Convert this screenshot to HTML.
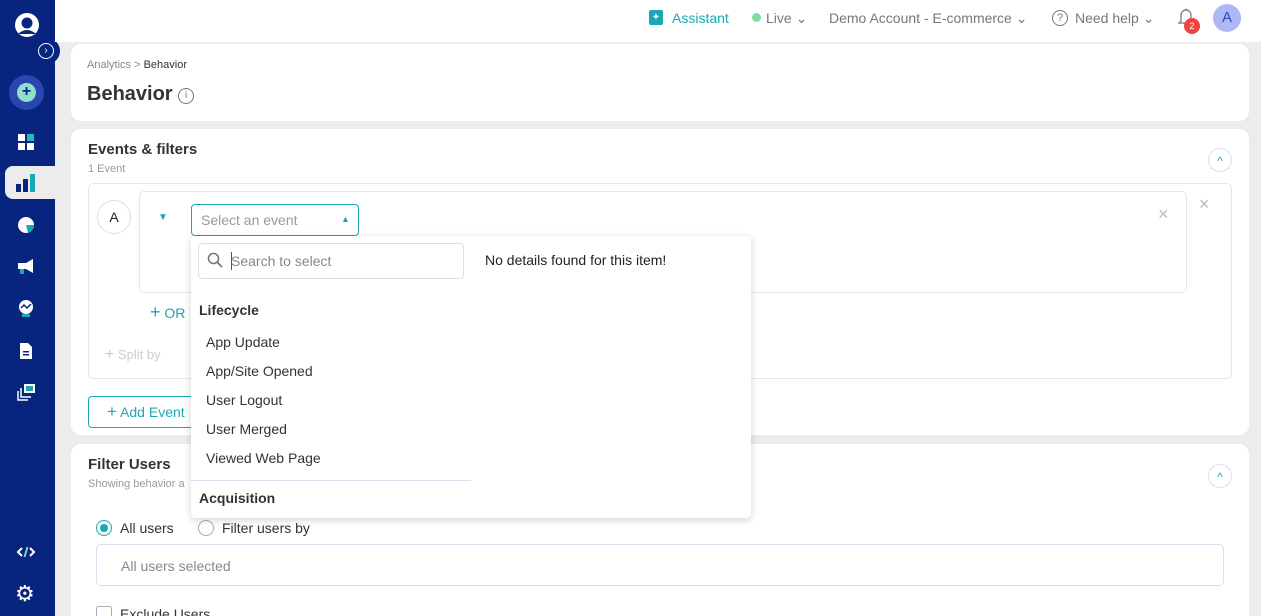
<!DOCTYPE html>
<html><head><meta charset="utf-8"><style>
*{box-sizing:border-box;margin:0;padding:0}
html{width:1261px;height:616px;overflow:hidden}
body{width:1261px;height:616px;overflow:hidden;background:#ececec;font-family:"Liberation Sans",sans-serif;color:#222;position:relative}
.side{position:absolute;left:0;top:0;width:55px;height:616px;background:#07247e}
.top{position:absolute;left:55px;top:0;width:1206px;height:42px;background:#fff}
.card{position:absolute;background:#fff;border-radius:10px}
.t{position:absolute;white-space:nowrap}
.ic{position:absolute;left:16px;width:20px;height:20px}
</style></head><body>
<div class="side">
 <svg style="position:absolute;left:14px;top:12px" width="26" height="26" viewBox="0 0 26 26"><circle cx="13" cy="13" r="12" fill="#fff"/><circle cx="13" cy="11" r="5.5" fill="#07247e"/><path d="M4 22Q13 14 22 22" fill="#07247e"/></svg>
 <div style="position:absolute;left:36px;top:38px;width:24px;height:26px;border-radius:0 13px 13px 0;background:#07247e"></div>
 <div style="position:absolute;left:38px;top:43px;width:16px;height:16px;border-radius:50%;border:1.5px solid #fff;color:#fff;font-size:10px;line-height:13px;text-align:center">›</div>
 <div style="position:absolute;left:9px;top:75px;width:35px;height:35px;border-radius:50%;background:#2a47b0"></div>
 <div style="position:absolute;left:17px;top:83px;width:19px;height:19px;border-radius:50%;background:#8ee0c8;color:#07247e;font-size:16px;line-height:18px;text-align:center;font-weight:bold">+</div>
 <svg class="ic" style="top:132px" viewBox="0 0 20 20"><rect x="2" y="2" width="7" height="7" fill="#fff"/><rect x="11" y="2" width="7" height="7" fill="#2bb"/><rect x="2" y="11" width="7" height="7" fill="#fff"/><rect x="11" y="11" width="7" height="7" fill="#fff"/></svg>
 <div style="position:absolute;left:5px;top:166px;width:55px;height:33px;background:#ececec;border-radius:8px 0 0 8px"></div>
 <svg class="ic" style="top:173px" viewBox="0 0 20 20"><rect x="0" y="11" width="5" height="8" fill="#07247e"/><rect x="7" y="6" width="5" height="13" fill="#07247e"/><rect x="14" y="1" width="5" height="18" fill="#1aa8b5"/></svg>
 <svg class="ic" style="top:215px" viewBox="0 0 20 20"><circle cx="10" cy="10" r="8" fill="#fff"/><path d="M10 10L18 10A8 8 0 0 1 12 18Z" fill="#1aa8b5"/></svg>
 <svg class="ic" style="top:257px" viewBox="0 0 20 20"><rect x="2" y="6" width="8" height="6" fill="#fff"/><path d="M10 6L17 2V16L10 12Z" fill="#fff"/><rect x="4" y="12" width="4" height="5" fill="#1aa8b5"/></svg>
 <svg class="ic" style="top:298px" viewBox="0 0 20 20"><circle cx="10" cy="9" r="7" fill="#fff"/><path d="M5 10L8 7L11 10L15 6" stroke="#07247e" stroke-width="1.5" fill="none"/><rect x="6" y="16" width="8" height="3" fill="#1aa8b5"/></svg>
 <svg class="ic" style="top:341px" viewBox="0 0 20 20"><path d="M4 2H12L16 6V18H4Z" fill="#fff"/><rect x="7" y="10" width="6" height="1.5" fill="#07247e"/><rect x="7" y="13" width="6" height="1.5" fill="#07247e"/></svg>
 <svg class="ic" style="top:383px" viewBox="0 0 20 20"><rect x="8" y="1" width="11" height="9" fill="#fff"/><rect x="10" y="3" width="7" height="5" fill="#1aa8b5"/><path d="M5 5V14H15M2 8V17H12" stroke="#fff" stroke-width="1.5" fill="none"/></svg>
 <svg style="position:absolute;left:16px;top:545px" width="20" height="14" viewBox="0 0 20 14"><path d="M6 3L2 7L6 11M14 3L18 7L14 11" stroke="#fff" stroke-width="2" fill="none"/><path d="M11.5 2L8.5 12" stroke="#8ee0c8" stroke-width="1.8"/></svg>
 <div class="t" style="left:15px;top:583px;color:#fff;font-size:22px;line-height:22px">⚙</div>
</div>
<div class="top">
 <div style="position:absolute;left:594px;top:10px;width:14px;height:15px;background:#1aa8b5;border-radius:2px;color:#fff;font-size:10px;text-align:center;line-height:15px">✦</div>
 <div class="t" style="left:617px;top:10px;font-size:14px;color:#1aa8b5">Assistant</div>
 <div style="position:absolute;left:697px;top:13px;width:9px;height:9px;border-radius:50%;background:#7fdc9b"></div>
 <div class="t" style="left:711px;top:10px;font-size:14px;color:#777">Live ⌄</div>
 <div class="t" style="left:774px;top:10px;font-size:14px;color:#777">Demo Account - E-commerce ⌄</div>
 <div style="position:absolute;left:997px;top:10px;width:16px;height:16px;border-radius:50%;border:1.3px solid #777;font-size:11px;color:#777;text-align:center;line-height:14px">?</div>
 <div class="t" style="left:1020px;top:10px;font-size:14px;color:#777">Need help ⌄</div>
 <svg style="position:absolute;left:1122px;top:7px" width="18" height="20" viewBox="0 0 18 20"><path d="M4 14V8A5 5 0 0 1 14 8V14L16 16H2Z" stroke="#888" stroke-width="1.4" fill="none"/><circle cx="9" cy="2.5" r="1" fill="#888"/></svg>
 <div style="position:absolute;left:1129px;top:18px;width:16px;height:16px;border-radius:50%;background:#ef4444;color:#fff;font-size:9px;text-align:center;line-height:16px">2</div>
 <div style="position:absolute;left:1158px;top:4px;width:28px;height:28px;border-radius:50%;background:#aeb8f7;color:#3346b8;font-size:15px;text-align:center;line-height:28px">A</div>
</div>
<div class="card" style="left:71px;top:44px;width:1178px;height:77px">
 <div class="t" style="left:16px;top:15px;font-size:11px;color:#888">Analytics &gt; <span style="color:#333">Behavior</span></div>
 <div class="t" style="left:16px;top:39px;font-size:20px;font-weight:bold;color:#333">Behavior <span style="display:inline-block;width:16px;height:16px;border:1.3px solid #777;border-radius:50%;font-size:10px;line-height:13px;text-align:center;color:#777;vertical-align:2px;font-weight:normal">i</span></div>
</div>
<div class="card" style="left:71px;top:129px;width:1178px;height:306px">
 <div class="t" style="left:17px;top:12px;font-size:15px;font-weight:bold;color:#333">Events &amp; filters</div>
 <div class="t" style="left:17px;top:34px;font-size:11px;color:#999">1 Event</div>
 <div style="position:absolute;left:1137px;top:19px;width:24px;height:24px;border-radius:50%;border:1px solid #dde;color:#1aa8b5;text-align:center;font-size:12px;line-height:24px">^</div>
 <div style="position:absolute;left:17px;top:54px;width:1144px;height:196px;border:1px solid #e6e6ee;border-radius:5px"></div>
 <div style="position:absolute;left:26px;top:71px;width:34px;height:34px;border-radius:50%;border:1px solid #ddd;text-align:center;line-height:33px;font-size:14px">A</div>
 <div style="position:absolute;left:68px;top:62px;width:1048px;height:102px;border:1px solid #e6e6ee;border-radius:5px"></div>
 <div class="t" style="left:87px;top:83px;font-size:10px;color:#1aa8b5">▼</div>
 <div class="t" style="left:1087px;top:75px;font-size:18px;color:#bbb">×</div>
 <div class="t" style="left:1128px;top:65px;font-size:18px;color:#bbb">×</div>
 <div class="t" style="left:79px;top:173px;font-size:14px;color:#1aa8b5"><span style="font-size:18px">+</span> OR</div>
 <div class="t" style="left:34px;top:217px;font-size:13px;color:#ccc"><span style="font-size:16px">+</span> Split by</div>
 <div style="position:absolute;left:17px;top:267px;width:140px;height:32px;border:1px solid #1aa8b5;border-radius:4px"></div>
 <div class="t" style="left:36px;top:273px;font-size:14px;color:#1aa8b5"><span style="font-size:17px">+</span> Add Event</div>
</div>
<div class="card" style="left:71px;top:444px;width:1178px;height:190px">
 <div class="t" style="left:17px;top:12px;font-size:15px;font-weight:bold;color:#333">Filter Users</div>
 <div class="t" style="left:17px;top:34px;font-size:11px;color:#999">Showing behavior a</div>
 <div style="position:absolute;left:1137px;top:20px;width:24px;height:24px;border-radius:50%;border:1px solid #dde;color:#1aa8b5;text-align:center;font-size:12px;line-height:24px">^</div>
 <div style="position:absolute;left:25px;top:76px;width:16px;height:16px;border-radius:50%;border:1.5px solid #1aa8b5"></div>
 <div style="position:absolute;left:29px;top:80px;width:8px;height:8px;border-radius:50%;background:#1aa8b5"></div>
 <div class="t" style="left:49px;top:76px;font-size:14px;color:#333">All users</div>
 <div style="position:absolute;left:127px;top:76px;width:16px;height:16px;border-radius:50%;border:1.3px solid #aab"></div>
 <div class="t" style="left:151px;top:76px;font-size:14px;color:#333">Filter users by</div>
 <div style="position:absolute;left:25px;top:100px;width:1128px;height:42px;border:1px solid #dde;border-radius:5px"></div>
 <div class="t" style="left:50px;top:114px;font-size:14px;color:#888">All users selected</div>
 <div style="position:absolute;left:25px;top:162px;width:16px;height:16px;border:1.3px solid #aab;border-radius:3px"></div>
 <div class="t" style="left:49px;top:162px;font-size:14px;color:#333">Exclude Users</div>
</div>
<div style="position:absolute;left:191px;top:204px;width:168px;height:32px;border:1px solid #1aa8b5;border-radius:4px;background:#fff"></div>
<div class="t" style="left:201px;top:212px;font-size:14px;color:#999">Select an event</div>
<div class="t" style="left:341px;top:214px;font-size:9px;color:#1aa8b5">▲</div>
<div style="position:absolute;left:191px;top:236px;width:560px;height:282px;background:#fff;border-radius:4px;box-shadow:0 2px 8px rgba(0,0,0,.18)">
 <div style="position:absolute;left:7px;top:7px;width:266px;height:36px;border:1px solid #dde;border-radius:4px"></div>
 <svg style="position:absolute;left:16px;top:16px" width="16" height="16" viewBox="0 0 16 16"><circle cx="6.5" cy="6.5" r="5" stroke="#777" stroke-width="1.6" fill="none"/><path d="M10 10L15 15" stroke="#777" stroke-width="1.8"/></svg>
 <div style="position:absolute;left:40px;top:16px;width:1px;height:18px;background:#555"></div>
 <div class="t" style="left:40px;top:17px;font-size:14px;color:#888">Search to select</div>
 <div class="t" style="left:294px;top:16px;font-size:14px;color:#222">No details found for this item!</div>
 <div class="t" style="left:8px;top:66px;font-size:14px;font-weight:bold;color:#333">Lifecycle</div>
 <div class="t" style="left:15px;top:98px;font-size:14px;color:#333">App Update</div>
 <div class="t" style="left:15px;top:127px;font-size:14px;color:#333">App/Site Opened</div>
 <div class="t" style="left:15px;top:156px;font-size:14px;color:#333">User Logout</div>
 <div class="t" style="left:15px;top:185px;font-size:14px;color:#333">User Merged</div>
 <div class="t" style="left:15px;top:214px;font-size:14px;color:#333">Viewed Web Page</div>
 <div style="position:absolute;left:0;top:244px;width:280px;height:1px;background:#dde"></div>
 <div class="t" style="left:8px;top:254px;font-size:14px;font-weight:bold;color:#333">Acquisition</div>
</div>
</body></html>
